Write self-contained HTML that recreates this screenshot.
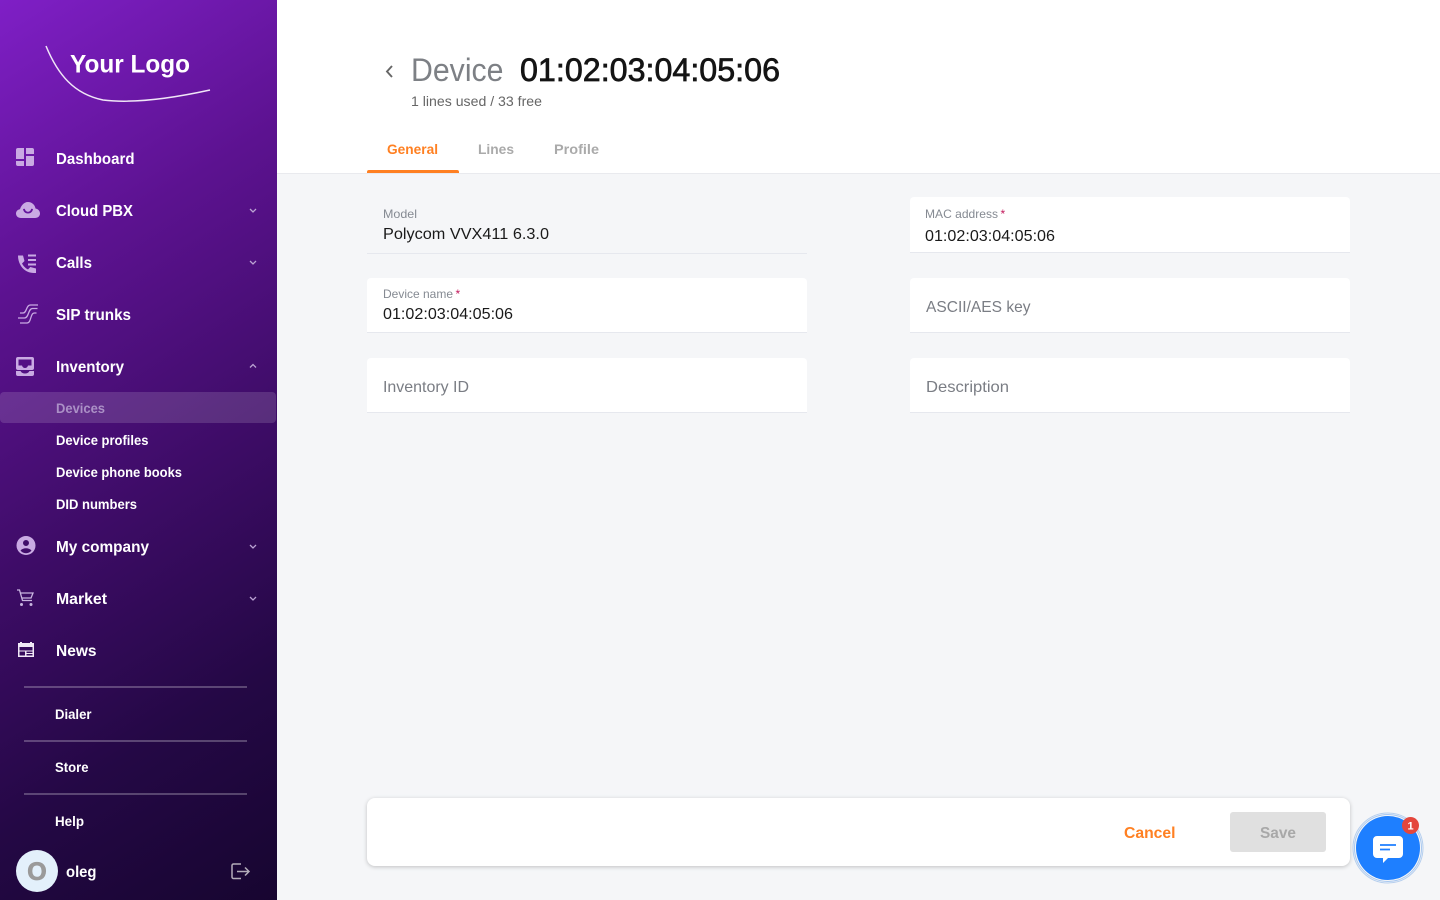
<!DOCTYPE html>
<html><head><meta charset="utf-8"><title>Device</title>
<style>
html,body{margin:0;padding:0;width:1440px;height:900px;overflow:hidden;background:#f5f6f8;font-family:"Liberation Sans",sans-serif}
.a{position:absolute}
#side{left:0;top:0;width:277px;height:900px;background:linear-gradient(148deg,#7f1fc6 0%,#5c1290 28%,#3d0c66 55%,#240845 78%,#170530 100%)}
#head{left:277px;top:0;width:1163px;height:173px;background:#fff;border-bottom:1px solid #e9eaee}
.f{background:#fff;border-radius:4px 4px 0 0;border-bottom:1px solid #e6e8ee;width:440px;box-sizing:border-box}
svg{position:absolute;left:0;top:0}
text{font-family:"Liberation Sans",sans-serif}
.n{font-size:16px;font-weight:700;fill:#fff}
.s{font-size:14px;font-weight:700;fill:#fff}
.l{font-size:12px;fill:#858a92}
.v{font-size:16px;fill:#1a1a1a}
.p{font-size:16px;fill:#7a7d84}
.i{fill:#c9aae3}
.ch{fill:none;stroke:#bba3d3;stroke-width:1.3}
</style></head><body>
<div class="a" id="side"></div>
<div class="a" id="head"></div>
<div class="a" style="left:367px;top:170px;width:92px;height:3px;background:#ff8022;border-radius:2px 2px 0 0"></div>
<div class="a f" style="left:367px;top:197px;height:57px;background:none"></div>
<div class="a f" style="left:910px;top:197px;height:56px"></div>
<div class="a f" style="left:367px;top:278px;height:55px"></div>
<div class="a f" style="left:910px;top:278px;height:55px"></div>
<div class="a f" style="left:367px;top:358px;height:55px"></div>
<div class="a f" style="left:910px;top:358px;height:55px"></div>
<div class="a" style="left:367px;top:798px;width:983px;height:68px;background:#fff;border-radius:8px;box-shadow:0 1px 4px rgba(0,0,0,.22)"></div>
<div class="a" style="left:1230px;top:812px;width:96px;height:40px;background:#e0e0e0;border-radius:3px"></div>
<div class="a" style="left:0;top:392px;width:276px;height:31px;background:rgba(255,255,255,.14);border-radius:4px"></div>
<div class="a" style="left:24px;top:686px;width:223px;height:2px;background:rgba(255,255,255,.25)"></div>
<div class="a" style="left:24px;top:740px;width:223px;height:2px;background:rgba(255,255,255,.25)"></div>
<div class="a" style="left:24px;top:793px;width:223px;height:2px;background:rgba(255,255,255,.25)"></div>

<svg width="1440" height="900" viewBox="0 0 1440 900">
<!-- logo -->
<path d="M46 46C58 75 74 94 103 100C135 104 178 97 210 90" fill="none" stroke="#f0e6f7" stroke-width="1.5"/>
<text x="70" y="72.500" font-size="25" font-weight="700" fill="#fff" textLength="120" lengthAdjust="spacingAndGlyphs">Your Logo</text>

<!-- icons -->
<path class="i" d="M18 148h6v11h-8v-9a2 2 0 0 1 2-2zM26 148h6a2 2 0 0 1 2 2v4h-8zM26 156h8v8a2 2 0 0 1-2 2h-6zM16 161h8v5h-6a2 2 0 0 1-2-2z"/>
<path class="i" fill-rule="evenodd" d="M21 218c-3 0-5-2-5-4.500 0-2.300 1.700-4 4-4.300 1-3 3.500-7.200 8-7.200 4 0 7 3 7.500 6.500 2.700.5 4.500 2.500 4.500 5 0 2.500-2 4.500-5 4.500zM23 209c.5 3 2.500 4.500 5 4.500s4.500-1.500 5-4.500l-1.800-.3c-.4 1.900-1.600 3-3.200 3s-2.800-1.100-3.200-3z"/>
<path class="i" d="M18 255.500h5l1.500 5.500-2.500 2.500c1.200 2.500 3.300 4.600 6 6l2.300-2.500 5.700 1.500v4.500h-2C24.500 273 18 265 18 255.500z"/>
<path d="M28 255.500h8M28 260h8M28 264.500h8" stroke="#c9aae3" stroke-width="2" fill="none"/>
<path d="M20 313h3c4 0 3-8 7.500-8h7.500M18 318h6.500c4.500 0 3.500-9.500 8-9.500h5M20 323h7c4.500 0 3-10 7.500-10h2" stroke="#c9aae3" stroke-width="1.300" fill="none"/>
<path class="i" fill-rule="evenodd" d="M18 357h14a2 2 0 0 1 2 2v9a2 2 0 0 1-2 2H18a2 2 0 0 1-2-2v-9a2 2 0 0 1 2-2zM18.500 359.500v6h3.500c.5 1.700 1.500 2.500 3 2.500s2.500-.8 3-2.500h3.500v-6z"/>
<path class="i" d="M16 371h4.500c.8 1.600 2.500 2.500 4.500 2.500s3.700-.9 4.500-2.500H34v3a2 2 0 0 1-2 2H18a2 2 0 0 1-2-2z"/>
<path class="i" fill-rule="evenodd" d="M26 536a9.500 9.500 0 1 1 0 19 9.500 9.500 0 0 1 0-19zM26 540a3 3 0 1 0 0 6 3 3 0 0 0 0-6zM20.500 550.500c1.200 1.700 3.200 2.700 5.500 2.700s4.300-1 5.500-2.700c-1.200-1.500-3.300-2.300-5.500-2.300s-4.300.8-5.500 2.300z"/>
<path d="M17 590h2.500l3 10.500h9.500M20.500 593h12.500l-2 5h-9.500" fill="none" stroke="#c9b6e0" stroke-width="1.300"/>
<circle cx="21.500" cy="604.500" r="1.500" fill="#c9b6e0"/><circle cx="31" cy="604.500" r="1.500" fill="#c9b6e0"/>
<path fill="#f0e8f6" fill-rule="evenodd" d="M18 643h2v-1h2v1h8v-1h2v1h2v14H18zM19.500 647v8.500h5.500V651.500H19.500v-1H32.500v-3.500zM26.500 651.500v1.500h6v-1.500zM26.500 654v1.500h6V654z"/>

<!-- chevrons -->
<path class="ch" d="M250 209l3 3 3-3M250 261l3 3 3-3M250 545l3 3 3-3M250 597l3 3 3-3M250 367.500l3-3 3 3"/>

<!-- nav -->
<text class="n" x="56" y="164" textLength="78.500" lengthAdjust="spacingAndGlyphs">Dashboard</text>
<text class="n" x="56" y="216" textLength="77" lengthAdjust="spacingAndGlyphs">Cloud PBX</text>
<text class="n" x="56" y="268" textLength="36" lengthAdjust="spacingAndGlyphs">Calls</text>
<text class="n" x="56" y="320" textLength="75" lengthAdjust="spacingAndGlyphs">SIP trunks</text>
<text class="n" x="56" y="372" textLength="68" lengthAdjust="spacingAndGlyphs">Inventory</text>
<text class="s" x="56" y="413" textLength="49" lengthAdjust="spacingAndGlyphs" style="fill:#ab90c6">Devices</text>
<text class="s" x="56" y="445" textLength="92.500" lengthAdjust="spacingAndGlyphs">Device profiles</text>
<text class="s" x="56" y="477" textLength="126" lengthAdjust="spacingAndGlyphs">Device phone books</text>
<text class="s" x="56" y="509" textLength="81" lengthAdjust="spacingAndGlyphs">DID numbers</text>
<text class="n" x="56" y="552" textLength="93" lengthAdjust="spacingAndGlyphs">My company</text>
<text class="n" x="56" y="604" textLength="51" lengthAdjust="spacingAndGlyphs">Market</text>
<text class="n" x="56" y="656" textLength="40.500" lengthAdjust="spacingAndGlyphs">News</text>
<text class="s" x="55" y="719" textLength="36.500" lengthAdjust="spacingAndGlyphs">Dialer</text>
<text class="s" x="55" y="772" textLength="33.500" lengthAdjust="spacingAndGlyphs">Store</text>
<text class="s" x="55" y="826" textLength="29" lengthAdjust="spacingAndGlyphs">Help</text>
<text class="n" x="66" y="877" textLength="30.500" lengthAdjust="spacingAndGlyphs">oleg</text>

<!-- avatar / logout -->
<circle cx="37" cy="871" r="21" fill="#e3f0fb"/>
<text x="37" y="880" font-size="25" font-weight="700" fill="#9a9a9a" stroke="#9a9a9a" stroke-width=".8" text-anchor="middle">O</text>
<path d="M241 864h-7.500a1.500 1.500 0 0 0-1.500 1.500v11.500a1.500 1.500 0 0 0 1.500 1.500h7.500M237 871.500h12M245 867.500l4 4-4 4" fill="none" stroke="#b3acb9" stroke-width="1.500"/>

<!-- header -->
<path d="M392 66l-5 5.500 5 5.500" fill="none" stroke="#666" stroke-width="1.900"/>
<text x="411" y="81" font-size="32" fill="#7d8085" textLength="92.500" lengthAdjust="spacingAndGlyphs">Device</text>
<text x="520" y="81" font-size="32" fill="#141414" stroke="#141414" stroke-width=".7" textLength="260" lengthAdjust="spacingAndGlyphs">01:02:03:04:05:06</text>
<text x="411" y="106" font-size="14" fill="#666" textLength="131" lengthAdjust="spacingAndGlyphs">1 lines used / 33 free</text>
<text x="387" y="154" font-size="14" font-weight="700" fill="#ff8022" textLength="51" lengthAdjust="spacingAndGlyphs">General</text>
<text x="478" y="154" font-size="14" font-weight="700" fill="#aaa" textLength="36" lengthAdjust="spacingAndGlyphs">Lines</text>
<text x="554" y="154" font-size="14" font-weight="700" fill="#aaa" textLength="45" lengthAdjust="spacingAndGlyphs">Profile</text>

<!-- form -->
<text class="l" x="383" y="218" textLength="34" lengthAdjust="spacingAndGlyphs">Model</text>
<text class="v" x="383" y="239" textLength="166" lengthAdjust="spacingAndGlyphs">Polycom VVX411 6.3.0</text>
<text class="l" x="383" y="298" textLength="70" lengthAdjust="spacingAndGlyphs">Device name</text>
<text x="455.500" y="298" font-size="12" fill="#c2185b">*</text>
<text class="v" x="383" y="319" textLength="130" lengthAdjust="spacingAndGlyphs">01:02:03:04:05:06</text>
<text class="p" x="383" y="392" textLength="86" lengthAdjust="spacingAndGlyphs">Inventory ID</text>
<text class="l" x="925" y="218" textLength="73" lengthAdjust="spacingAndGlyphs">MAC address</text>
<text x="1000.500" y="218" font-size="12" fill="#c2185b">*</text>
<text class="v" x="925" y="241" textLength="130" lengthAdjust="spacingAndGlyphs">01:02:03:04:05:06</text>
<text class="p" x="926" y="312" textLength="104.500" lengthAdjust="spacingAndGlyphs">ASCII/AES key</text>
<text class="p" x="926" y="392" textLength="83" lengthAdjust="spacingAndGlyphs">Description</text>

<!-- footer -->
<text x="1124" y="838" font-size="16" font-weight="700" fill="#ff8022" textLength="51.500" lengthAdjust="spacingAndGlyphs">Cancel</text>
<text x="1260" y="838" font-size="16" font-weight="700" fill="#a8a8a8" textLength="36" lengthAdjust="spacingAndGlyphs">Save</text>

<!-- chat -->
<circle cx="1388" cy="848" r="35" fill="none" stroke="#b6cfee" stroke-width="1"/>
<circle cx="1388" cy="848" r="33.500" fill="#f5f6f8" stroke="#a8c8f0" stroke-width="1"/>
<circle cx="1388" cy="848" r="32" fill="#1e7fff"/>
<path fill="#fff" d="M1377 836h22a4 4 0 0 1 4 4v14a4 4 0 0 1-4 4h-11l-5 5v-5h-6a4 4 0 0 1-4-4v-14a4 4 0 0 1 4-4z"/>
<path d="M1380 845h16M1380 849.500h10" stroke="#1e7fff" stroke-width="1.800" fill="none"/>
<circle cx="1410.500" cy="825.500" r="8.500" fill="#e4463c"/>
<text x="1410.500" y="829.500" font-size="11" font-weight="700" fill="#fff" text-anchor="middle">1</text>
</svg>
</body></html>
